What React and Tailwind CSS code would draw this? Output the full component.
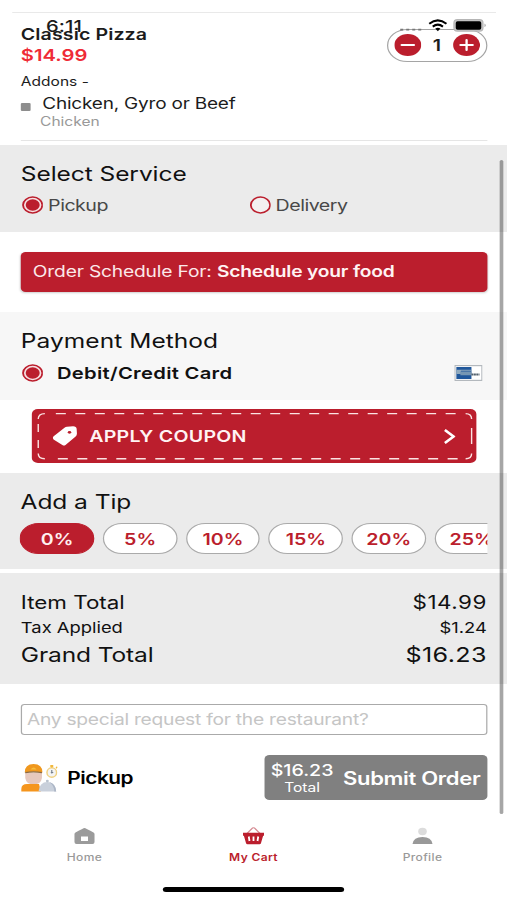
import React from "react";

const TIPS = ["0%", "5%", "10%", "15%", "20%", "25%"];

// Single-line text that never wraps.
function Line({ className = "", children }) {
  return <div className={"whitespace-nowrap " + className}>{children}</div>;
}

function Radio({ checked }) {
  return (
    <svg className="h-[18px] w-[18px] shrink-0" viewBox="0 0 18 18">
      <circle cx="9.700" cy="9" r="7.900" fill={checked ? "#f6dfe1" : "#f3f0f0"} stroke="#bb1e2d" strokeWidth="1.500" />
      {checked && <circle cx="9.700" cy="9" r="5.700" fill="#bb1e2d" />}
    </svg>
  );
}

function StatusBar() {
  return (
    <>
      <div className="absolute left-[37.500px] top-[16px] text-[16.500px] leading-[20px] font-medium tracking-[0.1px] text-[#1c1c1c]">6:11</div>
      <svg className="absolute left-[326px] top-[17px] h-[16px] w-[78px]" viewBox="0 0 95.5 16" preserveAspectRatio="none">
        <path d="M1 12.6h23" stroke="#777" strokeWidth="1.6" strokeDasharray="3 3" />
        <g fill="none" stroke="#000" strokeWidth="2">
          <path d="M30 6.800Q38.600 0 47.200 6.800" />
          <path d="M33.500 9.600Q38.600 5.600 43.700 9.600" />
        </g>
        <path d="M36 11.600q2.600-1.800 5.200 0l-2.600 2.600z" />
        <rect x="54.700" y="2.700" width="29" height="11.400" rx="3.400" fill="#c9c9c9" stroke="#b5b5b5" strokeWidth="1.200" />
        <rect x="56.500" y="4.200" width="25.500" height="8.600" rx="1.800" />
        <path d="M85.300 6.500q2.400 1.800 0 3.800z" fill="#999" />
      </svg>
    </>
  );
}

function Stepper() {
  return (
    <div className="mt-[16px] flex h-[33px] w-[82px] items-center justify-between rounded-full border border-[#a5a5a5] pl-[5px] pr-[4.500px] pb-[2px]">
      <svg className="h-[22px] w-[22px]" viewBox="0 0 22 22">
        <circle cx="11" cy="11" r="11" fill="#bb1e2d" />
        <path d="M6 11h10" stroke="#fff" strokeWidth="1.900" strokeLinecap="round" />
      </svg>
      <span className="pt-px text-[16px] font-semibold leading-[20px]">1</span>
      <svg className="h-[22px] w-[22px]" viewBox="0 0 22 22">
        <circle cx="11" cy="11" r="11" fill="#bb1e2d" />
        <path d="M6 11h10M11 6v10" stroke="#fff" strokeWidth="1.900" strokeLinecap="round" />
      </svg>
    </div>
  );
}

function Coupon() {
  return (
    <div className="relative ml-[25.500px] mt-[9px] flex h-[54px] w-[363.200px] items-center rounded-[5px] bg-[#bb1e2d] text-white">
      <svg className="absolute inset-0 h-full w-full" viewBox="0 0 445 54" preserveAspectRatio="none" fill="none" stroke="#fbe3e3" strokeWidth="1.400">
        <path d="M24 4.600H428" strokeDasharray="10 9.500" />
        <path d="M26 49.700H428" strokeDasharray="10 9.500" />
        <path d="M6.400 15v8M6.400 31v8M440 19v16" />
        <path d="M6.400 10Q6.400 4.600 13 4.600M6.400 44.500Q6.400 49.700 13 49.700M434 4.600Q440 4.600 440 10M434 49.700Q440 49.700 440 44.500" />
      </svg>
      <svg className="ml-[17.600px] h-[20px] w-[20px]" viewBox="0 0 24 20" preserveAspectRatio="none">
        <path fill="#fff" d="M14 .8 20 .3Q23.300.3 23.500 2.800L23.800 7.500Q23.800 9.500 22.500 10.600L12.600 19Q11 20.200 9.500 19L.9 13.400Q-.6 11.700 1 10.200L11.600 1.700Q12.700.9 14 .8z" />
        <ellipse cx="16.500" cy="6.300" rx="1.700" ry="1.400" fill="#bb1e2d" />
      </svg>
      <span className="ml-[9.700px] text-[16px] font-semibold tracking-[0.2px] text-[#fff3f3]">APPLY COUPON</span>
      <svg className="absolute left-[336.500px] top-[20px] h-[15px] w-[10px]" viewBox="0 0 12 15" preserveAspectRatio="none">
        <path d="M1.500 1 10 7.500 1.500 14" fill="none" stroke="#fff" strokeWidth="2.600" />
      </svg>
    </div>
  );
}

function AmexCard() {
  return (
    <svg className="h-[16px] w-[23px]" viewBox="0 0 28 16" preserveAspectRatio="none">
      <rect x=".6" y=".6" width="26.800" height="14.800" fill="#fff" stroke="#b3b8bd" strokeWidth="1.200" />
      <path d="M2 2h15v12H2z" fill="#20579b" />
      <path d="M2 4.800h15v1H6.500V9H2z" fill="#8fa9bd" />
      <path d="M6 6.500h11v3.800H6z" fill="#7596b3" />
      <path d="M17 9.500h8" stroke="#53616d" strokeWidth="1.800" strokeDasharray="2 .4" />
    </svg>
  );
}

function Courier() {
  return (
    <svg className="h-[30px] w-[30.500px]" viewBox="0 0 38 30" preserveAspectRatio="none">
      <path d="M4.500 9.500v5.500q1 6.500 8.500 6.500t8.500-6.500v-5.500z" fill="#e6c8bd" />
      <path d="M4 9.500Q4 1 13 1t9 8.500q-9-1.500-18 0z" fill="#f0981e" />
      <path d="M4.500 9.600q8.500-1.400 17 0" stroke="#8b6b45" strokeWidth="1.300" fill="none" />
      <path d="M10 6.500q3-4 6 0z" fill="#f7bd3c" />
      <path d="M.5 28.500V26q0-5 6-5h12l2 7.500z" fill="#f5951d" />
      <path d="M18 28.500q1-9.500 9-9.500t9 9.500z" fill="#c9d0db" />
      <path d="M29 19.300q6.500 1.200 7 9.200h-2q0-6-5-9.200z" fill="#acb6c6" />
      <ellipse cx="27" cy="18" rx="1.500" ry="1.200" fill="#b9c2ce" />
      <ellipse cx="31.500" cy="9.500" rx="4.900" ry="4.700" fill="#f4f4f4" stroke="#f0d080" strokeWidth="1.500" />
      <path d="M30 3h3M31.500 2v2.500M36 4l1 1" stroke="#f1b83c" strokeWidth="1.800" />
      <path d="M31.500 7v3.500M30.500 9.500h2.500" stroke="#77808c" strokeWidth="1.200" fill="none" />
    </svg>
  );
}

function Tab({ label, active, children }) {
  return (
    <div className={"flex w-[138px] flex-col items-center text-[9.800px] leading-[14px] tracking-[0.3px] " + (active ? "font-semibold text-[#bb1e2d]" : "font-medium text-[#999]")}>
      <svg className="mb-[6px] h-[18px] w-[18px]" viewBox="0 0 22 18" preserveAspectRatio="none">{children}</svg>
      {label}
    </div>
  );
}

export default function App() {
  return (
    <div className="h-[900px] w-[507px] overflow-hidden bg-white">
      <div className="relative h-[900px] w-[414px] origin-top-left scale-x-[1.22464] bg-white text-[#1c1c1c] [font-family:Inter,'Liberation_Sans',sans-serif]">
        <section className="h-[145px] pt-[12px]">
          <div className="mx-[9.500px] h-px bg-[#e9e9e9]" />
          <div className="mx-[16.500px] flex h-[128px] justify-between border-b border-[#e5e5e5]">
            <div className="pl-[0.500px]">
              <Line className="mt-[11px] text-[16px] font-semibold leading-[21px] tracking-[0.08px]">Classic Pizza</Line>
              <Line className="text-[16.500px] font-semibold leading-[21px] text-[#ef2b36]">$14.99</Line>
              <Line className="mt-[6px] text-[12.700px] leading-[20px]">Addons -</Line>
              <div className="mt-[1px] flex h-[22px] items-center gap-[10px]">
                <div className="mt-[5px] h-[8px] w-[7.500px] rounded-[1px] bg-[#8d8d8d]" />
                <Line className="text-[15.500px] leading-[22px] tracking-[-0.16px]">Chicken, Gyro or Beef</Line>
              </div>
              <Line className="-mt-[1px] ml-[15.700px] text-[12.700px] leading-[16px] text-[#999]">Chicken</Line>
            </div>
            <Stepper />
          </div>
        </section>

        <section className="h-[87px] bg-[#ebebeb] px-[17px] pt-[16px]">
          <Line className="text-[20px] leading-[26px] tracking-[-0.05px] text-[#111]">Select Service</Line>
          <div className="mt-[8px] flex h-[20px] text-[16px] tracking-[-0.4px] text-[#484848]">
            <div className="flex w-[186px] items-center gap-[4.300px]"><Radio checked />Pickup</div>
            <div className="flex items-center gap-[4px]"><Radio />Delivery</div>
          </div>
        </section>

        <div className="mx-[16.500px] mt-[20px] flex h-[40px] items-center rounded-[4px] bg-[#bb1e2d] pb-px pl-[10.300px] text-[15.700px] tracking-[-0.15px] text-[#fbe9ea] shadow-[0_1px_2px_#0003]">
          <Line>Order Schedule For: <b className="font-semibold text-[#fff3f3]">Schedule your food</b></Line>
        </div>

        <section className="mt-[20px] h-[88px] bg-[#f7f7f7] px-[17px] pt-[16px]">
          <Line className="text-[20px] leading-[26px] tracking-[0.05px] text-[#111]">Payment Method</Line>
          <div className="mt-[7px] flex h-[24px] items-center">
            <Radio checked />
            <Line className="ml-[11.500px] text-[16.500px] font-semibold tracking-[0.24px] text-[#111]">Debit/Credit Card</Line>
            <div className="ml-auto mr-[3.500px]"><AmexCard /></div>
          </div>
        </section>

        <Coupon />

        <section className="mt-[10px] h-[96px] bg-[#ebebeb] px-[16.300px] pt-[16px]">
          <Line className="pl-[0.500px] text-[20px] leading-[26px] tracking-[-0.05px] text-[#111]">Add a Tip</Line>
          <div className="mt-[8px] flex gap-[6.900px] overflow-hidden">
            {TIPS.map((tip, i) => (
              <div key={tip} className={"flex h-[31px] w-[60.800px] shrink-0 items-center justify-center rounded-full border text-[16px] font-semibold " + (i === 0 ? "border-[#bb1e2d] bg-[#bb1e2d] text-[#fff0f0]" : "border-[#aaa] bg-white text-[#bb1e2d]")}>
                {tip}
              </div>
            ))}
          </div>
        </section>

        <section className="mt-[4px] h-[111px] bg-[#ebebeb] px-[16.500px] pt-[16px] text-[#111]">
          <div className="flex h-[26px] items-center justify-between pl-[0.500px] pt-[1px] text-[18.300px]"><span>Item Total</span><span className="tracking-[0.400px]">$14.99</span></div>
          <div className="flex h-[25px] items-center justify-between pl-[0.500px] pt-[1px] text-[15px]"><span>Tax Applied</span><span>$1.24</span></div>
          <div className="flex h-[29px] items-center justify-between pl-[0.500px] text-[20px]"><span className="tracking-[-0.1px]">Grand Total</span><span className="pt-[2px] text-[20.500px] tracking-[0.3px]">$16.23</span></div>
        </section>

        <div className="mx-[16.500px] mt-[20px] flex h-[31px] items-center rounded-[3px] border border-[#aaa] pl-[4.500px] text-[15.700px] tracking-[-0.21px] text-[#c5c5c5]">
          <Line>Any special request for the restaurant?</Line>
        </div>

        <div className="mx-[16.500px] mt-[20px] flex h-[45px] items-center">
          <Courier />
          <span className="ml-[8px] pt-[2px] text-[17px] font-semibold tracking-[-0.4px] text-black">Pickup</span>
          <div className="ml-auto flex h-[45px] w-[182px] items-center justify-between rounded-[4px] bg-[#808080] pl-[5.500px] pr-[5.300px] text-white">
            <div className="pt-[2px] text-center text-[16px] font-medium leading-[18px]">
              $16.23
              <div className="text-[12.700px] font-normal leading-[17px]">Total</div>
            </div>
            <Line className="pt-[1px] text-[18px] font-semibold tracking-[-0.27px]">Submit Order</Line>
          </div>
        </div>

        <nav className="mt-[27px] flex">
          <Tab label="Home">
            <path fillRule="evenodd" fill="#9b9b9b" d="M11 1Q12 1 20 5.500 21 6 21 7v8q0 2-2 2H3q-2 0-2-2V7q0-1 1-1.500Q10 1 11 1zM7.500 9.500v4.500h7v-4.500z" />
          </Tab>
          <Tab label="My Cart" active>
            <path d="M4.500 6.500 10 1Q11 .5 12 1L17.500 6.500" stroke="#d58a92" strokeWidth="1.200" fill="none" />
            <path d="M.5 5.800h21v3h-.9L18.500 16q-.3 1.200-1.500 1.200H5q-1.200 0-1.500-1.200L1.400 8.800H.5z" fill="#bb1e2d" />
            <path d="M6.300 9.500l.7 4.500M11 9.500v4.500M15.700 9.500l-.7 4.500" stroke="#fff" strokeWidth="1.800" />
          </Tab>
          <Tab label="Profile">
            <ellipse cx="11" cy="4.500" rx="4.300" ry="3.700" fill="#dcdcdc" />
            <path d="M1 17q1-7 10-7t10 7z" fill="#999" />
          </Tab>
        </nav>

        <StatusBar />
        <div className="absolute left-[133px] top-[887px] h-[5px] w-[148px] rounded-full bg-black" />
        <div className="absolute left-[408px] top-[160px] h-[654px] w-[3px] rounded-full bg-[#00000059]" />
      </div>
    </div>
  );
}
